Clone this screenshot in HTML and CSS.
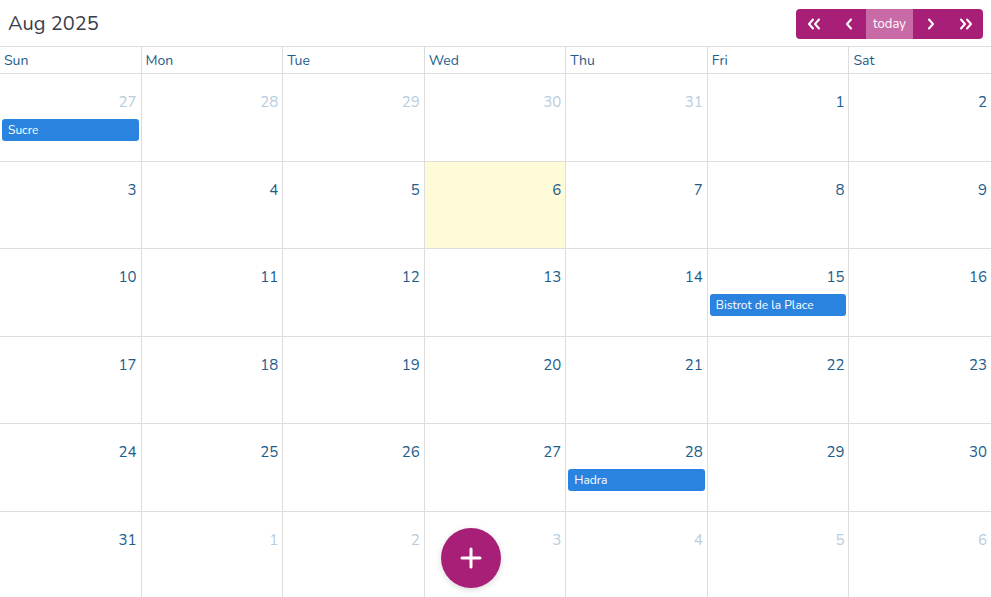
FILE: index.html
```html
<!DOCTYPE html>
<html lang="en">
<head>
  <meta charset="UTF-8" />
  <meta name="viewport" content="width=device-width, initial-scale=1.0"/>
  <title>Calendar</title>
  <link rel="stylesheet" href="styles.css">
</head>
<body>

  <div class="toolbar">
    <h2 class="title">Aug 2025</h2>
    <div class="nav-buttons">
      <button><svg width="14" height="12" viewBox="0 0 14 12"><path d="M6 1.5L2 6l4 4.5M12 1.5L8 6l4 4.5" fill="none" stroke="#fff" stroke-width="2" stroke-linecap="round" stroke-linejoin="round"/></svg></button>
      <button><svg width="8" height="12" viewBox="0 0 8 12"><path d="M6 1.5L2 6l4 4.5" fill="none" stroke="#fff" stroke-width="2" stroke-linecap="round" stroke-linejoin="round"/></svg></button>
      <button class="today">today</button>
      <button><svg width="8" height="12" viewBox="0 0 8 12"><path d="M2 1.5L6 6l-4 4.5" fill="none" stroke="#fff" stroke-width="2" stroke-linecap="round" stroke-linejoin="round"/></svg></button>
      <button><svg width="14" height="12" viewBox="0 0 14 12"><path d="M2 1.5L6 6l-4 4.5M8 1.5L12 6l-4 4.5" fill="none" stroke="#fff" stroke-width="2" stroke-linecap="round" stroke-linejoin="round"/></svg></button>
    </div>
  </div>

  <div class="weekdays">
    <div>Sun</div><div>Mon</div><div>Tue</div><div>Wed</div><div>Thu</div><div>Fri</div><div>Sat</div>
  </div>

  <div class="month" id="month"></div>

  <button class="fab">
    <svg width="24" height="24" viewBox="0 0 24 24"><path d="M12 3v18M3 12h18" stroke="#fff" stroke-width="3" stroke-linecap="round"/></svg>
  </button>

  <script>
    // Build the 6 week grid for Aug 2025
    const month = document.getElementById("month");
    const events = { "7-27": "Sucre", "8-15": "Bistrot de la Place", "8-28": "Hadra" };

    const start = new Date(2025, 6, 27);
    for (let i = 0; i < 42; i++) {
      const d = new Date(start);
      d.setDate(start.getDate() + i);
      const cell = document.createElement("div");
      cell.classList.add("day");
      if (d.getMonth() !== 7) cell.classList.add("other");
      if (d.getMonth() === 7 && d.getDate() === 6) cell.classList.add("current");

      const num = document.createElement("div");
      num.classList.add("day-number");
      num.textContent = d.getDate();
      cell.appendChild(num);

      const key = (d.getMonth() + 1) + "-" + d.getDate();
      if (events[key]) {
        const ev = document.createElement("div");
        ev.classList.add("event");
        ev.textContent = events[key];
        cell.appendChild(ev);
      }
      month.appendChild(cell);
    }
  </script>
</body>
</html>
```

FILE: styles.css
```css
body {
  margin: 0;
  font-family: 'Nunito', 'Lato', 'Noto Sans', sans-serif;
  background: #fff;
  overflow: hidden;
}

.toolbar {
  height: 46px;
  display: flex;
  align-items: center;
  justify-content: space-between;
  padding: 0 8px;
}

.title {
  margin: 0;
  font-size: 20px;
  font-weight: 400;
  color: #3b3b4b;
}

.nav-buttons {
  display: flex;
  border-radius: 4px;
  overflow: hidden;
  margin-top: 1px;
}

.nav-buttons button {
  width: 35px;
  height: 30px;
  border: none;
  padding: 0;
  background: #a81f78;
  color: white;
  font-family: inherit;
  display: flex;
  align-items: center;
  justify-content: center;
  cursor: pointer;
}

.nav-buttons button.today {
  width: 47px;
  font-size: 13px;
  background: #c76aa6;
}

.weekdays {
  display: grid;
  grid-template-columns: repeat(7, 1fr);
  border-top: 1px solid #ddd;
  border-bottom: 1px solid #ddd;
}

.weekdays div {
  height: 26px;
  line-height: 28px;
  padding-left: 4px;
  font-size: 14px;
  color: #1d5d8c;
  border-right: 1px solid #ddd;
}

.weekdays div:last-child,
.day:nth-child(7n) {
  border-right: none;
}

.month {
  display: grid;
  grid-template-columns: repeat(7, 1fr);
  grid-template-rows: repeat(6, 87.6px);
}

.day {
  border-right: 1px solid #ddd;
  border-bottom: 1px solid #ddd;
  padding: 0 2px;
}

.day.current {
  background: #fffad8;
}

.day-number {
  text-align: right;
  padding: 18px 2px 0 0;
  font-size: 15px;
  line-height: 20px;
  color: #1d5d8c;
}

.day.other .day-number {
  color: #b7cde0;
}

.event {
  margin-top: 7px;
  height: 22px;
  line-height: 22px;
  padding-left: 6px;
  border-radius: 3px;
  background: #2a84df;
  color: white;
  font-size: 12px;
}

.fab {
  position: absolute;
  left: 441px;
  top: 528px;
  width: 60px;
  height: 60px;
  border-radius: 50%;
  border: none;
  background: #a81f78;
  display: flex;
  align-items: center;
  justify-content: center;
  box-shadow: 0 2px 6px rgba(0,0,0,0.15);
  cursor: pointer;
}
```
